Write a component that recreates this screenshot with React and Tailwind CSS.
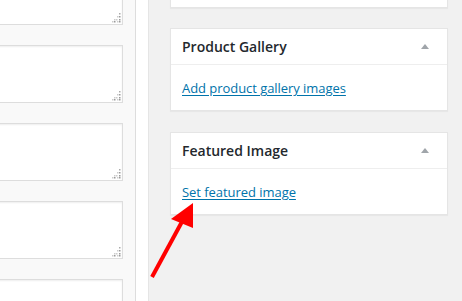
import React from 'react';

function Grip() {
    // dotted resize handle in the textarea corner
    const dots = [
        [7, 0, '#aaa'],
        [5, 3, '#ccc'], [7, 3, '#999'],
        [2, 6, '#ccc'], [4, 6, '#ccc'], [7, 6, '#999'],
        [0, 8, '#ccc'], [2, 8, '#999'], [5, 8, '#ccc'], [7, 8, '#999'],
    ];
    return (
        <svg className="absolute right-[1px] bottom-[1px]" width="9" height="10" viewBox="0 0 9 10">
            {dots.map(([x, y, c], i) => (
                <rect key={i} x={x} y={y} width="1.5" height="1.5" fill={c} />
            ))}
        </svg>
    );
}

function FakeTextarea() {
    return (
        <div className="relative h-[58px] w-[134px] shrink-0 bg-white border border-[#dddddd] shadow-[inset_0_1px_2px_rgba(0,0,0,0.07)]">
            <Grip />
        </div>
    );
}

function MetaBox({ title, link }) {
    return (
        <div className="bg-white border border-[#e5e5e5] shadow-[0_1px_1px_rgba(0,0,0,0.04)]">
            <div className="flex items-center justify-between h-[36px] px-[11px] border-b border-[#eeeeee]">
                <h2 className="text-[14px] font-semibold text-[#23282d]">{title}</h2>
                <span className="mr-[7px] w-0 h-0 border-l-[4px] border-r-[4px] border-b-[5px] border-l-transparent border-r-transparent border-b-[#a0a5aa]" />
            </div>
            <div className="h-[45px] px-[11px] pt-[10px]">
                <a href="#" className="text-[13px] tracking-[-0.05px] text-[#0073aa] underline underline-offset-2">{link}</a>
            </div>
        </div>
    );
}

export default function App() {
    return (
        <div
            className="relative flex w-[462px] h-[301px] overflow-hidden bg-[#f1f1f1]"
            style={{ fontFamily: '"Open Sans", "Liberation Sans", sans-serif' }}
        >
            {/* Левая колонка с полями */}
            <div className="flex shrink-0">
                <div className="w-[136px] bg-[#f9f9f9] border-r border-[#dddddd] overflow-hidden">
                    <div className="flex flex-col gap-[20px] -mt-[33px] -ml-[11px]">
                        <FakeTextarea />
                        <FakeTextarea />
                        <FakeTextarea />
                        <FakeTextarea />
                        <FakeTextarea />
                    </div>
                </div>
                <div className="w-[13px] bg-white border-r border-[#e5e5e5]" />
            </div>

            {/* Правая колонка с метабоксами */}
            <div className="flex-1 pl-[21px] pr-[14px]">
                <div className="h-[41px] -mt-[33px] bg-white border border-[#e5e5e5] shadow-[0_1px_1px_rgba(0,0,0,0.04)]" />
                <div className="mt-[20px]">
                    <MetaBox title="Product Gallery" link="Add product gallery images" />
                </div>
                <div className="mt-[21px]">
                    <MetaBox title="Featured Image" link="Set featured image" />
                </div>
            </div>

            {/* Красная стрелка */}
            <svg className="absolute left-0 top-0 pointer-events-none" width="462" height="301">
                <line x1="152" y1="277" x2="184" y2="218" stroke="#ff0000" strokeWidth="4" />
                <polygon points="193,203 171,219 193,228" fill="#ff0000" />
            </svg>
        </div>
    );
}
